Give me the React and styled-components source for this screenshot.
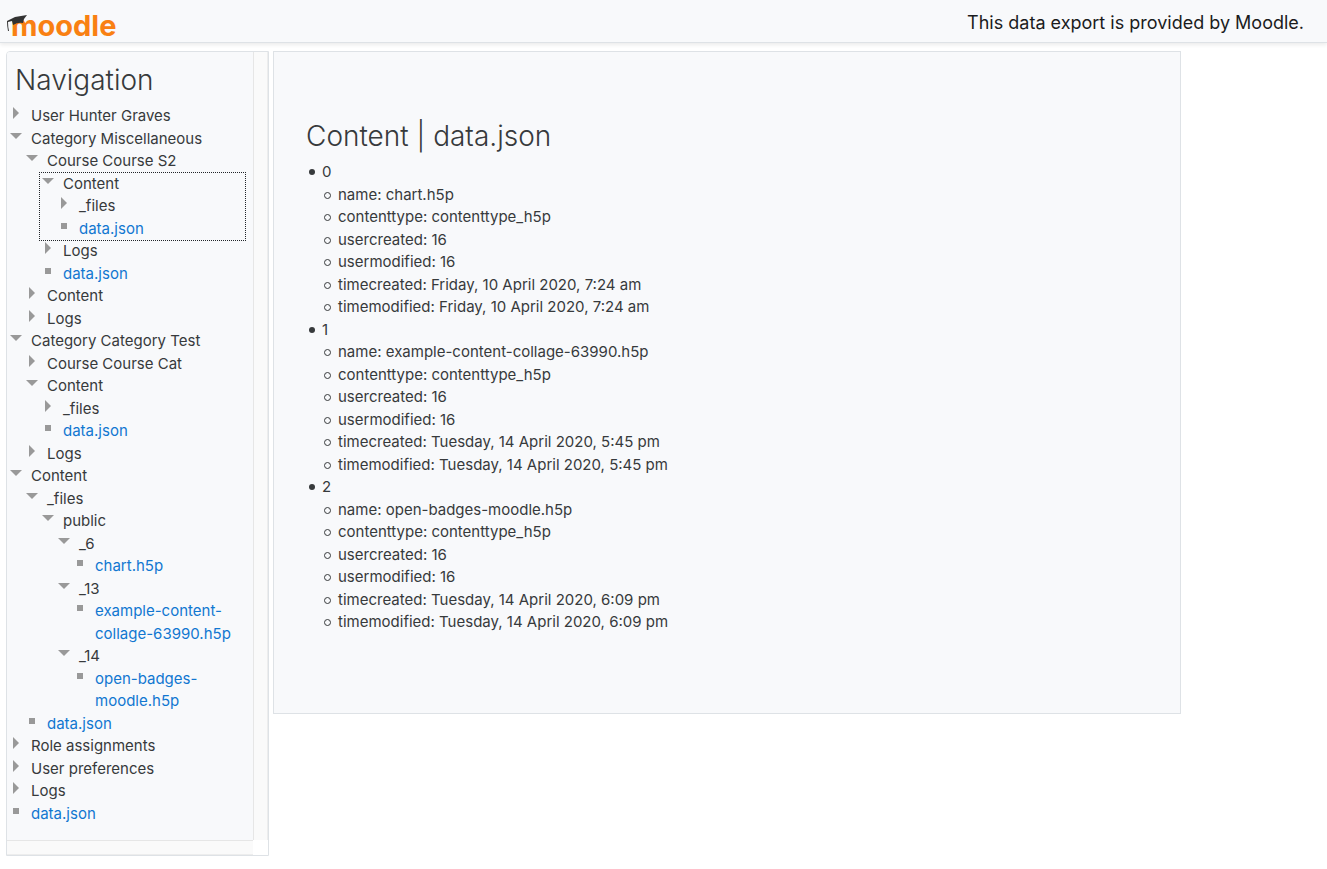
import { useState } from 'react';
import styled, { createGlobalStyle } from 'styled-components';


const tree = [
    { name: 'User Hunter Graves', items: [] },
    { name: 'Category Miscellaneous', open: true, items: [
        { name: 'Course Course S2', open: true, items: [
            { name: 'Content', open: true, focused: true, items: [
                { name: '_files', items: [] },
                { name: 'data.json' },
            ] },
            { name: 'Logs', items: [] },
            { name: 'data.json' },
        ] },
        { name: 'Content', items: [] },
        { name: 'Logs', items: [] },
    ] },
    { name: 'Category Category Test', open: true, items: [
        { name: 'Course Course Cat', items: [] },
        { name: 'Content', open: true, items: [
            { name: '_files', items: [] },
            { name: 'data.json' },
        ] },
        { name: 'Logs', items: [] },
    ] },
    { name: 'Content', open: true, items: [
        { name: '_files', open: true, items: [
            { name: 'public', open: true, items: [
                { name: '_6', open: true, items: [{ name: 'chart.h5p' }] },
                { name: '_13', open: true, items: [{ name: 'example-content-collage-63990.h5p' }] },
                { name: '_14', open: true, items: [{ name: 'open-badges-moodle.h5p' }] },
            ] },
        ] },
        { name: 'data.json' },
    ] },
    { name: 'Role assignments', items: [] },
    { name: 'User preferences', items: [] },
    { name: 'Logs', items: [] },
    { name: 'data.json' },
];

const entries = [
    { name: 'chart.h5p', time: 'Friday, 10 April 2020, 7:24 am' },
    { name: 'example-content-collage-63990.h5p', time: 'Tuesday, 14 April 2020, 5:45 pm' },
    { name: 'open-badges-moodle.h5p', time: 'Tuesday, 14 April 2020, 6:09 pm' },
];

function Icon({ leaf, open }) {
    return (
        <IconBox>
            <svg width="12" height="12" viewBox="0 0 12 12" fill="#999" aria-hidden="true">
                {leaf && <rect x="3" y="3" width="6" height="6" />}
                {!leaf && open && <path d="M0 3h12L6 9z" />}
                {!leaf && !open && <path d="M3 0v12l6-6z" />}
            </svg>
        </IconBox>
    );
}

function TreeItem({ item }) {
    const [open, setOpen] = useState(Boolean(item.open));

    if (!item.items) {
        return (
            <Item>
                <Row>
                    <Icon leaf />
                    <FileLink href="#">{item.name}</FileLink>
                </Row>
            </Item>
        );
    }

    return (
        <Item $focused={item.focused}>
            <Toggle type="button" aria-expanded={open} onClick={() => setOpen(!open)}>
                <Icon open={open} />
                <span>{item.name}</span>
            </Toggle>
            {open && item.items.length > 0 && (
                <Branch>
                    {item.items.map((child) => <TreeItem key={child.name} item={child} />)}
                </Branch>
            )}
        </Item>
    );
}

function Logo() {
    return (
        <LogoLink href="#" aria-label="moodle">
            <svg width="120" height="44" viewBox="0 0 120 44" aria-hidden="true">
                <text x="4" y="37" fill="#f98012" fontFamily="Inter, sans-serif" fontWeight="700" fontSize="29">moodle</text>
                <path d="M0 22 8 18 20 16 17 20 16 24Q11 23 6 26L5 22 1 23Q1 28 2 32L1 32Q0 27 0 22z" fill="#333" />
            </svg>
        </LogoLink>
    );
}

export default function App() {
    return (
        <>
            <GlobalStyle />
            <Header>
                <Logo />
                <Notice>This data export is provided by Moodle.</Notice>
            </Header>
            <Page>
                <Sidebar>
                    <NavPanel>
                        <Title>Navigation</Title>
                        <Tree>
                            {tree.map((item) => <TreeItem key={item.name} item={item} />)}
                        </Tree>
                    </NavPanel>
                    <TrackRight />
                    <TrackBottom />
                </Sidebar>
                <Content>
                    <Title>Content | data.json</Title>
                    <DataList>
                        {entries.map((entry, index) => (
                            <li key={entry.name}>
                                {index}
                                <FieldList>
                                    <li>name: {entry.name}</li>
                                    <li>contenttype: contenttype_h5p</li>
                                    <li>usercreated: 16</li>
                                    <li>usermodified: 16</li>
                                    <li>timecreated: {entry.time}</li>
                                    <li>timemodified: {entry.time}</li>
                                </FieldList>
                            </li>
                        ))}
                    </DataList>
                </Content>
            </Page>
        </>
    );
}


const GlobalStyle = createGlobalStyle`
    *,
    *::before {
        box-sizing: border-box;
    }

    body {
        margin: 0;
        background: #fff;
        color: #373a3c;
        font-family: Inter, "Liberation Sans", sans-serif;
        font-size: 15px;
        line-height: 1.5;
    }
`

const Header = styled.header`
    display: flex;
    align-items: center;
    justify-content: space-between;
    height: 43px;
    padding: 0 23px 0 7px;
    background: #f8f9fb;
    border-bottom: 1px solid #dee2e6;
    box-shadow: 0 2px 4px rgba(0, 0, 0, 0.08);
`

const LogoLink = styled.a`
    display: flex;
`

const Notice = styled.span`
    padding-top: 2px;
    color: #1b1c1d;
    font-size: 18px;
`

const Page = styled.main`
    display: grid;
    grid-template-columns: 263px minmax(0, 1fr);
    align-items: start;
    gap: 4px;
    padding: 8px 11% 8px 6px;
`

const Sidebar = styled.nav`
    display: grid;
    grid-template-columns: minmax(0, 1fr) 15px;
    grid-template-rows: auto 15px;
    border: 1px solid #dee2e6;
    border-radius: 4px 0 0 0;
`

const NavPanel = styled.div`
    padding: 9px 8px 7px;
    background: #f8f9fb;
    border-radius: 3px 0 0 0;
`

const TrackRight = styled.div`
    background: #fafafa;
    border-left: 1px solid #e6e6e6;
    border-right: 1px solid #ededed;
`

const TrackBottom = styled.div`
    background: #fafafa;
    border-top: 1px solid #e6e6e6;
    border-bottom: 1px solid #ededed;
`

const Title = styled.h2`
    margin: 0 0 6px;
    font-size: 28px;
    font-weight: 300;
    line-height: 38px;
`

const Tree = styled.ul`
    margin: 0 0 8px -7px;
    padding: 0;
    list-style: none;
`

const Branch = styled.ul`
    margin: 0;
    padding: 0 0 0 16px;
    list-style: none;
`

const Item = styled.li`
    outline: ${(props) => (props.$focused ? '1px dotted #212529' : 'none')};
`

const Row = styled.div`
    display: flex;
    align-items: flex-start;
    gap: 7px;
`

const Toggle = styled.button`
    display: flex;
    align-items: flex-start;
    gap: 7px;
    padding: 0;
    border: 0;
    background: none;
    color: inherit;
    font: inherit;
    text-align: left;
    cursor: pointer;
`

const IconBox = styled.span`
    display: flex;
    flex: none;
    justify-content: center;
    width: 16px;
    padding-top: 2px;
`

const FileLink = styled.a`
    color: #1177d1;
    text-decoration: none;

    &:hover {
        text-decoration: underline;
    }
`

const Content = styled.section`
    padding: 65px 32px 79px;
    background: #f8f9fb;
    border: 1px solid #dee2e6;
`

const DataList = styled.ul`
    margin: 0;
    padding-left: 16px;
    list-style: none;

    > li::before {
        content: '';
        display: inline-block;
        width: 6px;
        height: 6px;
        margin: 0 7px 0 -13px;
        border-radius: 50%;
        background: #373a3c;
        vertical-align: 2px;
    }
`

const FieldList = styled(DataList)`
    > li::before {
        width: 7px;
        height: 7px;
        margin-left: -14px;
        border: 1px solid #373a3c;
        background: none;
        vertical-align: 1px;
    }
`
